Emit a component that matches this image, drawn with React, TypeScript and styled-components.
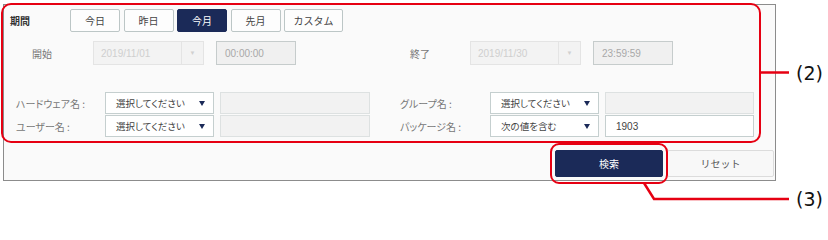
import styled, {createGlobalStyle} from 'styled-components';

const GlobalStyle = createGlobalStyle`
    body {
        margin: 0;
        background: #fff;
        font-family: "Noto Sans CJK JP", "Noto Sans", sans-serif;
        font-feature-settings: "palt";
    }
`;

const Page = styled.div`
    position: relative;
    width: 828px;
    height: 212px;
    overflow: hidden;
`;

const Panel = styled.div`
    box-sizing: border-box;
    margin: 4px 0 0 3px;
    width: 773px;
    height: 177px;
    border: 1px solid #8c8c8c;
    background: #fafafa;
    padding: 4px 0 0 6px;
    display: flex;
    flex-direction: column;
`;

const Row = styled.div<{$top: number; $h: number}>`
    display: flex;
    align-items: center;
    margin-top: ${p => p.$top}px;
    height: ${p => p.$h}px;
`;

const Label = styled.div<{$w: number; $pl?: number; $bold?: boolean; $ml?: number}>`
    box-sizing: border-box;
    flex-shrink: 0;
    width: ${p => p.$w}px;
    padding-left: ${p => p.$pl || 0}px;
    margin-left: ${p => p.$ml || 0}px;
    font-size: 10px;
    color: ${p => p.$bold ? '#333' : '#777'};
    font-weight: ${p => p.$bold ? 700 : 400};
    white-space: nowrap;
`;

const PeriodButtons = styled.div`
    display: flex;
    gap: 3.5px;
`;

const PeriodButton = styled.button<{$active?: boolean; $w: number}>`
    box-sizing: border-box;
    width: ${p => p.$w}px;
    height: 23px;
    padding: 0;
    border-radius: 2px;
    border: 1px solid ${p => p.$active ? '#1b2a58' : '#bcc6c6'};
    background: ${p => p.$active ? '#1b2a58' : '#fdfdfd'};
    color: ${p => p.$active ? '#fff' : '#444'};
    font-family: inherit;
    font-size: 10px;
`;

const DateBox = styled.div`
    box-sizing: border-box;
    flex-shrink: 0;
    width: 111px;
    height: 24px;
    border: 1px solid #e4e4e4;
    background: #f3f3f3;
    display: flex;
    align-items: center;
    color: #cfcfcf;
    font-family: "Liberation Sans", sans-serif;
    font-size: 10px;
`;

const DateText = styled.span`
    flex: 1;
    padding-left: 7px;
`;

const DateCaret = styled.span`
    width: 21px;
    height: 100%;
    border-left: 1px solid #e4e4e4;
    display: flex;
    align-items: center;
    justify-content: center;
    font-size: 6px;
    color: #d0d0d0;
`;

const TimeBox = styled.div<{$ml: number}>`
    box-sizing: border-box;
    flex-shrink: 0;
    width: 80px;
    height: 24px;
    margin-left: ${p => p.$ml}px;
    border: 1px solid #c6cccc;
    background: #f0f0f0;
    display: flex;
    align-items: center;
    padding-left: 8px;
    color: #a8a8a8;
    font-family: "Liberation Sans", sans-serif;
    font-size: 10px;
`;

const Select = styled.div`
    box-sizing: border-box;
    flex-shrink: 0;
    width: 109px;
    height: 22px;
    border: 1px solid #c5cfcf;
    background: #fff;
    display: flex;
    align-items: center;
    justify-content: space-between;
    padding: 0 8px 0 10px;
    font-size: 9.5px;
    color: #444;
`;

const Caret = styled.span`
    width: 0;
    height: 0;
    border-left: 3.5px solid transparent;
    border-right: 3.5px solid transparent;
    border-top: 5px solid #1b2a58;
`;

const TextField = styled.div<{$filled?: boolean; $w: number}>`
    box-sizing: border-box;
    flex-shrink: 0;
    width: ${p => p.$w}px;
    height: 22px;
    margin-left: 6px;
    border: 1px solid ${p => p.$filled ? '#c5cfcf' : '#dde1e1'};
    background: ${p => p.$filled ? '#fff' : '#f2f2f2'};
    display: flex;
    align-items: center;
    padding-left: 10px;
    color: #444;
    font-family: "Liberation Sans", sans-serif;
    font-size: 10px;
`;

const Footer = styled.div`
    display: flex;
    justify-content: flex-end;
    gap: 4px;
    margin-top: 13px;
    padding-right: 1px;
`;

const ActionButton = styled.button<{$primary?: boolean}>`
    box-sizing: border-box;
    width: ${p => p.$primary ? 108 : 107}px;
    height: 27px;
    padding: 0;
    border-radius: 2px;
    border: 1px solid ${p => p.$primary ? '#1b2a58' : '#dcdcdc'};
    background: ${p => p.$primary ? '#1b2a58' : '#f8f8f8'};
    color: ${p => p.$primary ? '#fff' : '#555'};
    font-family: inherit;
    font-size: 10px;
`;

const Highlight = styled.div<{$x: number; $y: number; $w: number; $h: number; $r: number}>`
    position: absolute;
    box-sizing: border-box;
    left: ${p => p.$x}px;
    top: ${p => p.$y}px;
    width: ${p => p.$w}px;
    height: ${p => p.$h}px;
    border: 2.5px solid #e60012;
    border-radius: ${p => p.$r}px;
    pointer-events: none;
`;

const Callouts = styled.svg`
    position: absolute;
    left: 0;
    top: 0;
    pointer-events: none;
`;

const CalloutText = styled.div<{$y: number}>`
    position: absolute;
    left: 796px;
    top: ${p => p.$y}px;
    font-family: "DejaVu Sans", sans-serif;
    font-size: 19px;
    line-height: 22px;
    color: #111;
`;

const periods = [
    {label: '今日', w: 50},
    {label: '昨日', w: 50},
    {label: '今月', w: 50, active: true},
    {label: '先月', w: 50},
    {label: 'カスタム', w: 59},
];

const App = () => {
    return (
        <Page>
            <GlobalStyle/>
            <Panel>
                <Row $top={0} $h={23}>
                    <Label $w={60} $bold>期間</Label>
                    <PeriodButtons>
                        {periods.map(p => (
                            <PeriodButton key={p.label} $w={p.w} $active={p.active}>{p.label}</PeriodButton>
                        ))}
                    </PeriodButtons>
                </Row>
                <Row $top={9} $h={24}>
                    <Label $w={83} $pl={22}>開始</Label>
                    <DateBox><DateText>2019/11/01</DateText><DateCaret>▼</DateCaret></DateBox>
                    <TimeBox $ml={12}>00:00:00</TimeBox>
                    <Label $w={60} $ml={114}>終了</Label>
                    <DateBox><DateText>2019/11/30</DateText><DateCaret>▼</DateCaret></DateBox>
                    <TimeBox $ml={12}>23:59:59</TimeBox>
                </Row>
                <Row $top={27} $h={22}>
                    <Label $w={95} $pl={6}>ハードウェア名 :</Label>
                    <Select>選択してください<Caret/></Select>
                    <TextField $w={150}/>
                    <Label $w={90} $ml={30}>グループ名 :</Label>
                    <Select>選択してください<Caret/></Select>
                    <TextField $w={149}/>
                </Row>
                <Row $top={1} $h={22}>
                    <Label $w={95} $pl={6}>ユーザー名 :</Label>
                    <Select>選択してください<Caret/></Select>
                    <TextField $w={150}/>
                    <Label $w={90} $ml={30}>パッケージ名 :</Label>
                    <Select>次の値を含む<Caret/></Select>
                    <TextField $w={149} $filled>1903</TextField>
                </Row>
                <Footer>
                    <ActionButton $primary>検索</ActionButton>
                    <ActionButton>リセット</ActionButton>
                </Footer>
            </Panel>

            <Highlight $x={1} $y={3} $w={760} $h={140} $r={10}/>
            <Highlight $x={550} $y={143} $w={118} $h={41} $r={9}/>
            <Callouts width={828} height={212}>
                <line x1={759} y1={72.5} x2={789} y2={72.5} stroke="#e60012" strokeWidth={2.5}/>
                <polyline points="644,183 654,199 789,199" fill="none" stroke="#e60012" strokeWidth={2.5}/>
            </Callouts>
            <CalloutText $y={62}>(2)</CalloutText>
            <CalloutText $y={188}>(3)</CalloutText>
        </Page>
    );
};

export default App;
